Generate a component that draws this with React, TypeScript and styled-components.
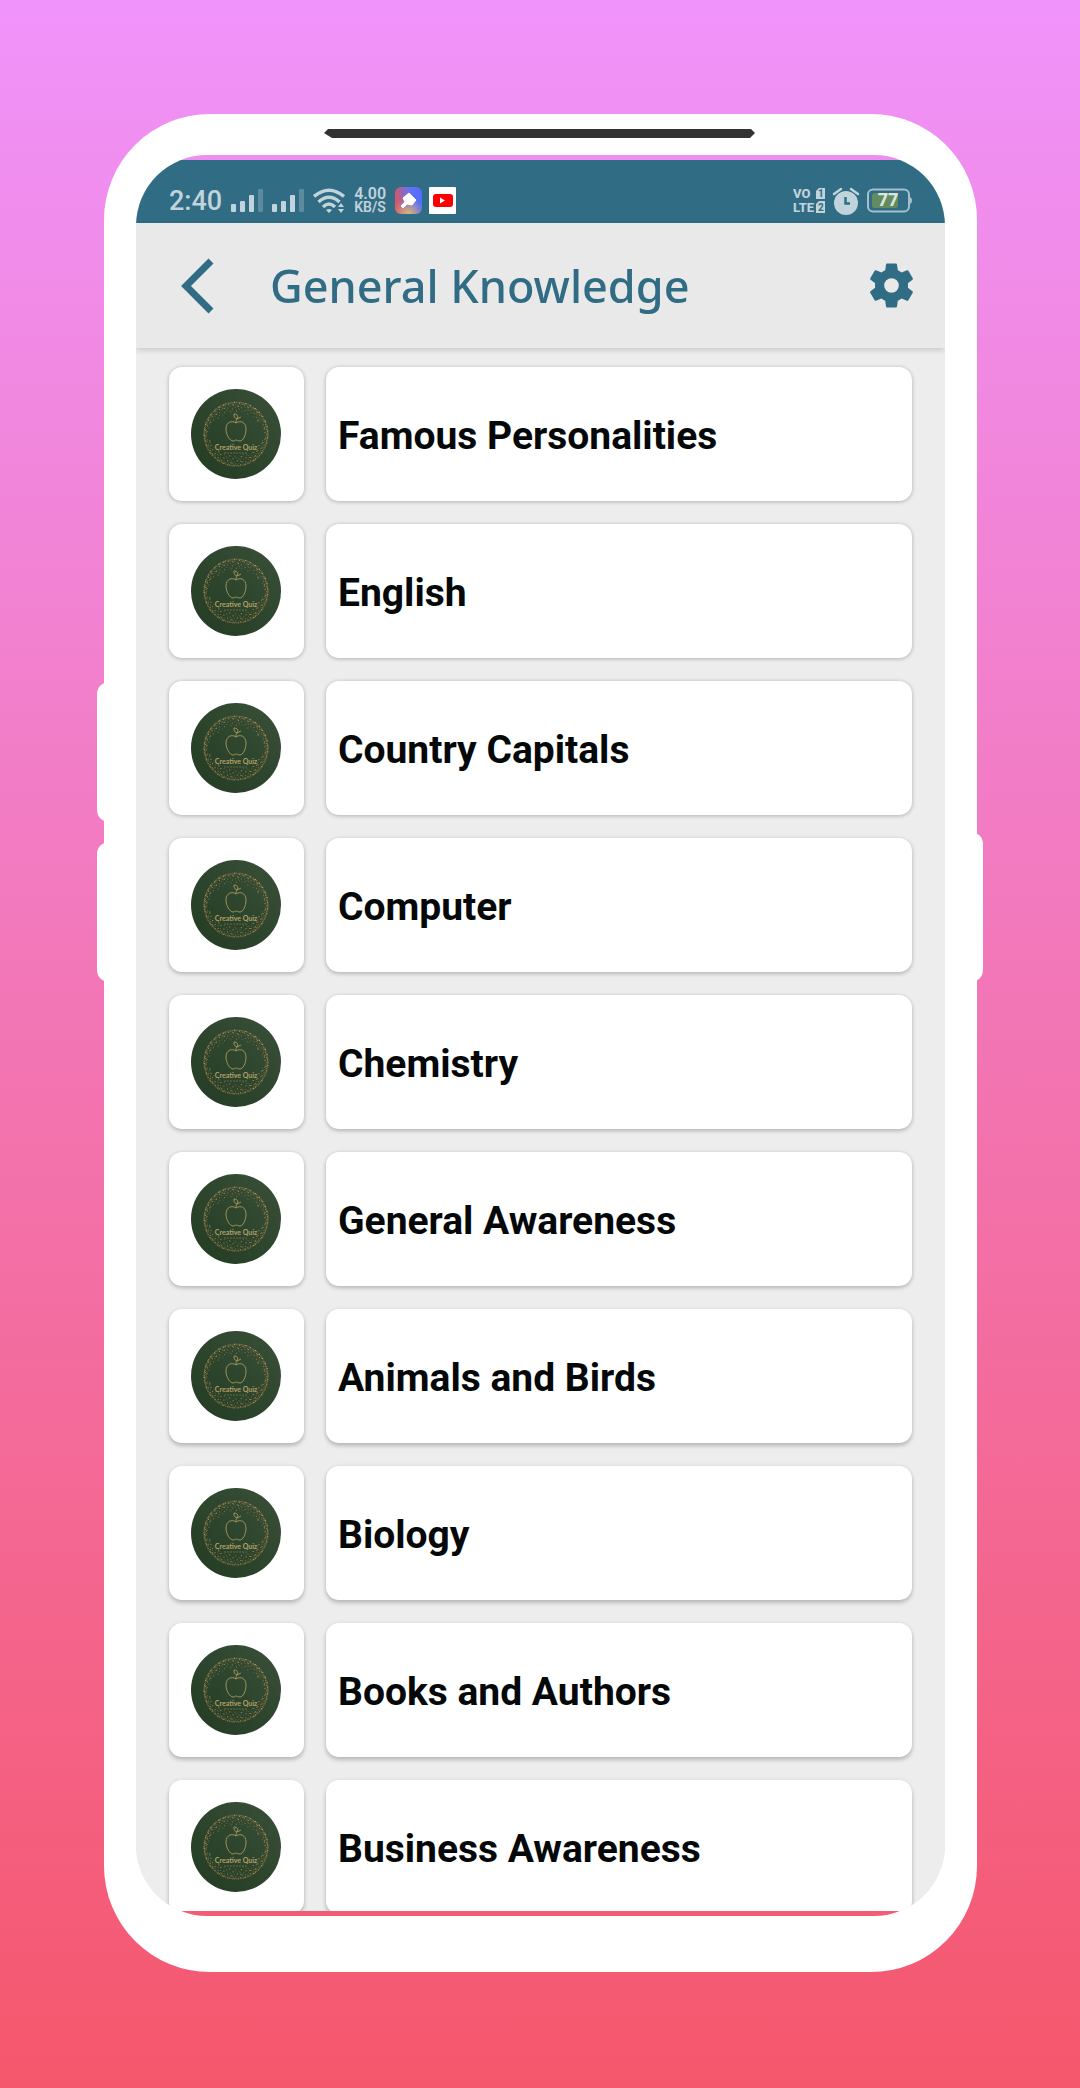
import React from "react";
import styled, { createGlobalStyle } from "styled-components";

const Global = createGlobalStyle`
  * { box-sizing: border-box; }
  body { margin: 0; font-family: Roboto, "Liberation Sans", sans-serif; }
`;

const Stage = styled.div`
  height: 100vh;
  padding: 114px 103px 116px 104px;
  display: flex;
  background: linear-gradient(#f093fb, #f5576c);
`;

const Phone = styled.div`
  position: relative;
  flex: 1;
  min-width: 0;
  display: flex;
  flex-direction: column;
  padding: 15px 32px 56px;
  border-radius: 106px;
  background: #fff;
`;

const SideKey = styled.span<{ $side: "left" | "right"; $top: number; $height: number }>`
  position: absolute;
  top: ${(p) => p.$top}px;
  ${(p) => p.$side}: ${(p) => (p.$side === "left" ? -7 : -6)}px;
  width: 24px;
  height: ${(p) => p.$height}px;
  border-radius: 12px;
  background: #fff;
`;

const Speaker = styled.svg`
  display: block;
  flex: none;
  align-self: center;
  width: 433px;
  height: 9px;
  margin-bottom: 17px;
`;

const Display = styled.div`
  flex: 1;
  min-height: 0;
  padding: 5px 0;
  display: flex;
  flex-direction: column;
  overflow: hidden;
  border-radius: 71px;
  background: linear-gradient(#f08df0 5px, #ededed 5px, #ededed calc(100% - 5px), #f45b77 calc(100% - 5px));
`;

const StatusBar = styled.div`
  flex: none;
  height: 63px;
  padding: 18px 33px 0;
  display: flex;
  justify-content: space-between;
  align-items: center;
  background: #316c85;
  color: #c1d3db;
`;

const StatusGroup = styled.div<{ $gap: number }>`
  display: flex;
  align-items: center;
  gap: ${(p) => p.$gap}px;
`;

const Clock = styled.time`
  font-size: 27px;
  line-height: 32px;
  font-weight: 500;
`;

const Speed = styled.div`
  display: flex;
  flex-direction: column;
  font-weight: 600;
`;

const SpeedValue = styled.span`
  font-size: 16px;
  line-height: 14px;
`;

const SpeedUnit = styled.span`
  font-size: 14px;
  line-height: 13px;
`;

const Header = styled.header`
  position: relative;
  flex: none;
  height: 125px;
  padding: 0 26px 0 40px;
  display: flex;
  align-items: center;
  background: #e9e9e9;
  box-shadow: 0 2px 6px rgba(0, 0, 0, 0.16);
`;

const IconButton = styled.button`
  display: flex;
  padding: 0;
  border: 0;
  background: none;
  color: #316c85;
  cursor: pointer;
`;

const Title = styled.h1`
  flex: 1;
  margin: 0;
  padding-left: 50px;
  color: #316c85;
  font-family: "Noto Sans", "Open Sans", sans-serif;
  font-size: 45px;
  line-height: 60px;
  font-weight: 500;
`;

const List = styled.ul`
  flex: 1;
  min-height: 0;
  margin: 0;
  padding: 19px 33px;
  display: flex;
  flex-direction: column;
  gap: 23px;
  overflow-y: auto;
  scrollbar-width: none;
  list-style: none;
  background: #ededed;
`;

const Row = styled.li`
  flex: none;
`;

const RowButton = styled.button`
  width: 100%;
  padding: 0;
  border: 0;
  display: flex;
  gap: 22px;
  background: none;
  color: #050808;
  font: 700 39px/46px Roboto, "Liberation Sans", sans-serif;
  text-align: left;
  cursor: pointer;
`;

const Card = styled.span<{ $depth: number }>`
  height: 134px;
  display: flex;
  align-items: center;
  border-radius: 13px;
  background: #fff;
  box-shadow: 0 ${(p) => p.$depth}px 4px rgba(0, 0, 0, 0.2), 0 0 4px rgba(0, 0, 0, 0.08);
`;

const Thumb = styled(Card)`
  flex: none;
  width: 135px;
  padding-left: 22px;
`;

const Label = styled(Card)`
  flex: 1;
  padding: 4px 12px 0;
`;

const topics = [
  "Famous Personalities",
  "English",
  "Country Capitals",
  "Computer",
  "Chemistry",
  "General Awareness",
  "Animals and Birds",
  "Biology",
  "Books and Authors",
  "Business Awareness",
];

const goldTones = ["#b98a52", "#8d6a3c", "#d9c07c", "#7b6a3c"];

// Scattered gold dust, densest at the rim of the emblem.
const dust = Array.from({ length: 420 }, (_, i) => {
  const angle = i * 2.39996;
  const spread = ((i * 37) % 101) / 101;
  const vertical = Math.abs(Math.sin(angle));
  const r = 32 - spread * spread * spread * (3 + 8 * vertical);
  return {
    x: Math.round((44.5 + r * Math.cos(angle)) * 10) / 10,
    y: Math.round((44.5 + r * Math.sin(angle)) * 10) / 10,
    tone: goldTones[i % 4],
  };
});

function Emblem() {
  return (
    <svg width="90" height="90" viewBox="0 0 90 90" aria-hidden="true">
      <defs>
        <linearGradient id="leafGreen" x1="0" y1="1" x2="1" y2="0">
          <stop offset="0" stopColor="#233b22" />
          <stop offset="1" stopColor="#3a5039" />
        </linearGradient>
      </defs>
      <circle cx="45" cy="45" r="45" fill="url(#leafGreen)" />
      {dust.map((d, i) => (
        <rect key={i} x={d.x} y={d.y} width="1" height="1" fill={d.tone} opacity="0.7" />
      ))}
      <g fill="none" stroke="#b9a566" strokeWidth="0.8">
        <path d="M45 34 C41 31 35 33 35 40 C35 46 39 52 42 52 C44 52 44 51 45 51 C46 51 47 52 49 52 C52 52 55 46 55 40 C55 33 49 31 45 34Z" />
        <path d="M45 34 C45 32 45 31 46 30 M46 30 C43 29 43 27 43 25 C46 25 48 27 46 30 L50 28" />
      </g>
      <text x="45" y="61" textAnchor="middle" fontSize="7" fontFamily="Lato, sans-serif" fill="#b3a068">
        Creative Quiz
      </text>
      <path d="M33 64 H57" stroke="#8f8050" strokeWidth="1" strokeDasharray="2 1" opacity="0.6" />
    </svg>
  );
}

function Signal() {
  return (
    <svg width="32" height="24" viewBox="0 0 32 24" fill="currentColor" aria-hidden="true">
      <rect x="0" y="15" width="5" height="8" rx="1" />
      <rect x="9" y="12" width="5" height="11" rx="1" />
      <rect x="18" y="6" width="5" height="17" rx="1" />
      <rect x="27" y="0" width="5" height="23" rx="1" opacity="0.3" />
    </svg>
  );
}

function Wifi() {
  return (
    <svg width="32" height="26" viewBox="0 0 32 26" aria-hidden="true">
      <g fill="none" stroke="currentColor" strokeWidth="3.5">
        <path d="M1 8.500 Q16 -4 31 8.500" />
        <path d="M5.500 14 Q16 4.500 26.500 14" />
        <path d="M10 19 Q16 13 22 19" />
      </g>
      <path d="M13 22 Q16 20 19 22 L16 25Z M25 19 L28 15 L31 19Z M25 21 H31 L28 25Z" fill="currentColor" />
    </svg>
  );
}

function CleanerIcon() {
  return (
    <svg width="27" height="27" viewBox="0 0 27 27" aria-hidden="true">
      <defs>
        <linearGradient id="cleanBase" x1="0" y1="0.3" x2="1" y2="0.2">
          <stop offset="0" stopColor="#dc5560" />
          <stop offset="0.5" stopColor="#6672ee" />
          <stop offset="1" stopColor="#526dff" />
        </linearGradient>
        <radialGradient id="cleanGlow" cx="0.5" cy="1" r="0.6">
          <stop offset="0" stopColor="#e0b767" />
          <stop offset="1" stopColor="#e0b070" stopOpacity="0" />
        </radialGradient>
      </defs>
      <rect width="27" height="27" rx="6" fill="url(#cleanBase)" />
      <rect width="27" height="27" rx="6" fill="url(#cleanGlow)" />
      <path d="M14 6 L21 13 L17 18 L12 17 L8 21 L6 19 L10 15 L8 11Z" fill="#fff" stroke="#fff" strokeLinejoin="round" />
    </svg>
  );
}

function VideoIcon() {
  return (
    <svg width="27" height="27" viewBox="0 0 27 27" aria-hidden="true">
      <rect width="27" height="27" rx="1" fill="#fff" />
      <rect x="4" y="7" width="20" height="13" rx="3" fill="#f00" />
      <path d="M11 10.500 L16 13.500 L11 16.500Z" fill="#fff" />
    </svg>
  );
}

function Volte() {
  return (
    <svg width="32" height="27" viewBox="0 0 32 27" fill="currentColor" aria-hidden="true">
      <g fontFamily="Roboto, sans-serif" fontWeight="800" fontSize="13">
        <text x="0" y="11">VO</text>
        <text x="0" y="25">LTE</text>
      </g>
      <path d="M26 1 H32 V12 H23 V4Z M26 14 H32 V26 H23 V17Z" />
      <g fontFamily="Roboto, sans-serif" fontWeight="700" fontSize="10" fill="#316c85">
        <text x="25" y="10">1</text>
        <text x="25" y="24">2</text>
      </g>
    </svg>
  );
}

function Alarm() {
  return (
    <svg width="28" height="28" viewBox="0 0 28 28" aria-hidden="true">
      <circle cx="14" cy="16" r="12" fill="currentColor" />
      <path d="M2 7 L9 2 M26 7 L19 2" stroke="currentColor" strokeWidth="2.5" strokeLinecap="round" />
      <path d="M13.500 10 V16.500 H18" fill="none" stroke="#316c85" strokeWidth="2.5" />
    </svg>
  );
}

function Battery() {
  return (
    <svg width="45" height="25" viewBox="0 0 45 25" aria-hidden="true">
      <rect x="1" y="1.500" width="41" height="22" rx="5" fill="none" stroke="#a6c0cb" strokeWidth="2" />
      <path d="M42 9 Q45 9 45 12.500 Q45 16 42 16Z" fill="#a6c0cb" />
      <rect x="5" y="5" width="26" height="15" rx="3" fill="#628b61" />
      <text x="21" y="18" textAnchor="middle" fontFamily="Open Sans, sans-serif" fontWeight="700" fontSize="18" fill="#dbe6dc">
        77
      </text>
    </svg>
  );
}

export default function App() {
  return (
    <>
      <Global />
      <Stage>
        <Phone>
          <SideKey $side="left" $top={568} $height={140} />
          <SideKey $side="left" $top={728} $height={140} />
          <SideKey $side="right" $top={718} $height={150} />
          <Speaker viewBox="0 0 433 9" aria-hidden="true">
            <path d="M4 0 H427 L431 4 L426 9 H8 L0 4Z" fill="#333" />
          </Speaker>
          <Display>
            <StatusBar>
              <StatusGroup $gap={9}>
                <Clock>2:40</Clock>
                <Signal />
                <Signal />
                <Wifi />
                <Speed>
                  <SpeedValue>4.00</SpeedValue>
                  <SpeedUnit>KB/S</SpeedUnit>
                </Speed>
                <StatusGroup $gap={7}>
                  <CleanerIcon />
                  <VideoIcon />
                </StatusGroup>
              </StatusGroup>
              <StatusGroup $gap={7}>
                <Volte />
                <Alarm />
                <Battery />
              </StatusGroup>
            </StatusBar>
            <Header>
              <IconButton aria-label="Back">
                <svg width="44" height="56" viewBox="0 0 44 56" fill="none" stroke="currentColor" strokeWidth="7">
                  <path d="M35 3 L10 28 L35 53" />
                </svg>
              </IconButton>
              <Title>General Knowledge</Title>
              <IconButton aria-label="Settings">
                <svg width="55" height="55" viewBox="0 0 24 24" fill="currentColor">
                  <path d="M19.140 12.940c.04-.3.06-.61.06-.94 0-.32-.02-.64-.07-.94l2.030-1.580a.49.49 0 0 0 .12-.61l-1.920-3.320a.488.488 0 0 0-.59-.22l-2.390.96c-.5-.38-1.030-.7-1.620-.94l-.36-2.540a.484.484 0 0 0-.48-.41h-3.840c-.24 0-.43.17-.47.41l-.36 2.540c-.59.24-1.130.57-1.620.94l-2.390-.96c-.22-.08-.47 0-.59.22L2.740 8.870c-.12.21-.08.47.12.61l2.030 1.580c-.05.3-.09.63-.09.94s.02.64.07.94l-2.030 1.580a.49.49 0 0 0-.12.61l1.920 3.320c.12.22.37.29.59.22l2.390-.96c.5.38 1.030.7 1.620.94l.36 2.540c.05.24.24.41.48.41h3.840c.24 0 .44-.17.47-.41l.36-2.540c.59-.24 1.130-.56 1.620-.94l2.390.96c.22.08.47 0 .59-.22l1.920-3.320c.12-.22.07-.47-.12-.61l-2.010-1.580zM12 15.200a3.200 3.200 0 1 1 0-6.400 3.200 3.200 0 0 1 0 6.400z" />
                </svg>
              </IconButton>
            </Header>
            <List>
              {topics.map((topic, i) => (
                <Row key={topic}>
                  <RowButton>
                    <Thumb $depth={1 + Math.floor(i / 3)}>
                      <Emblem />
                    </Thumb>
                    <Label $depth={1 + Math.floor(i / 3)}>{topic}</Label>
                  </RowButton>
                </Row>
              ))}
            </List>
          </Display>
        </Phone>
      </Stage>
    </>
  );
}
